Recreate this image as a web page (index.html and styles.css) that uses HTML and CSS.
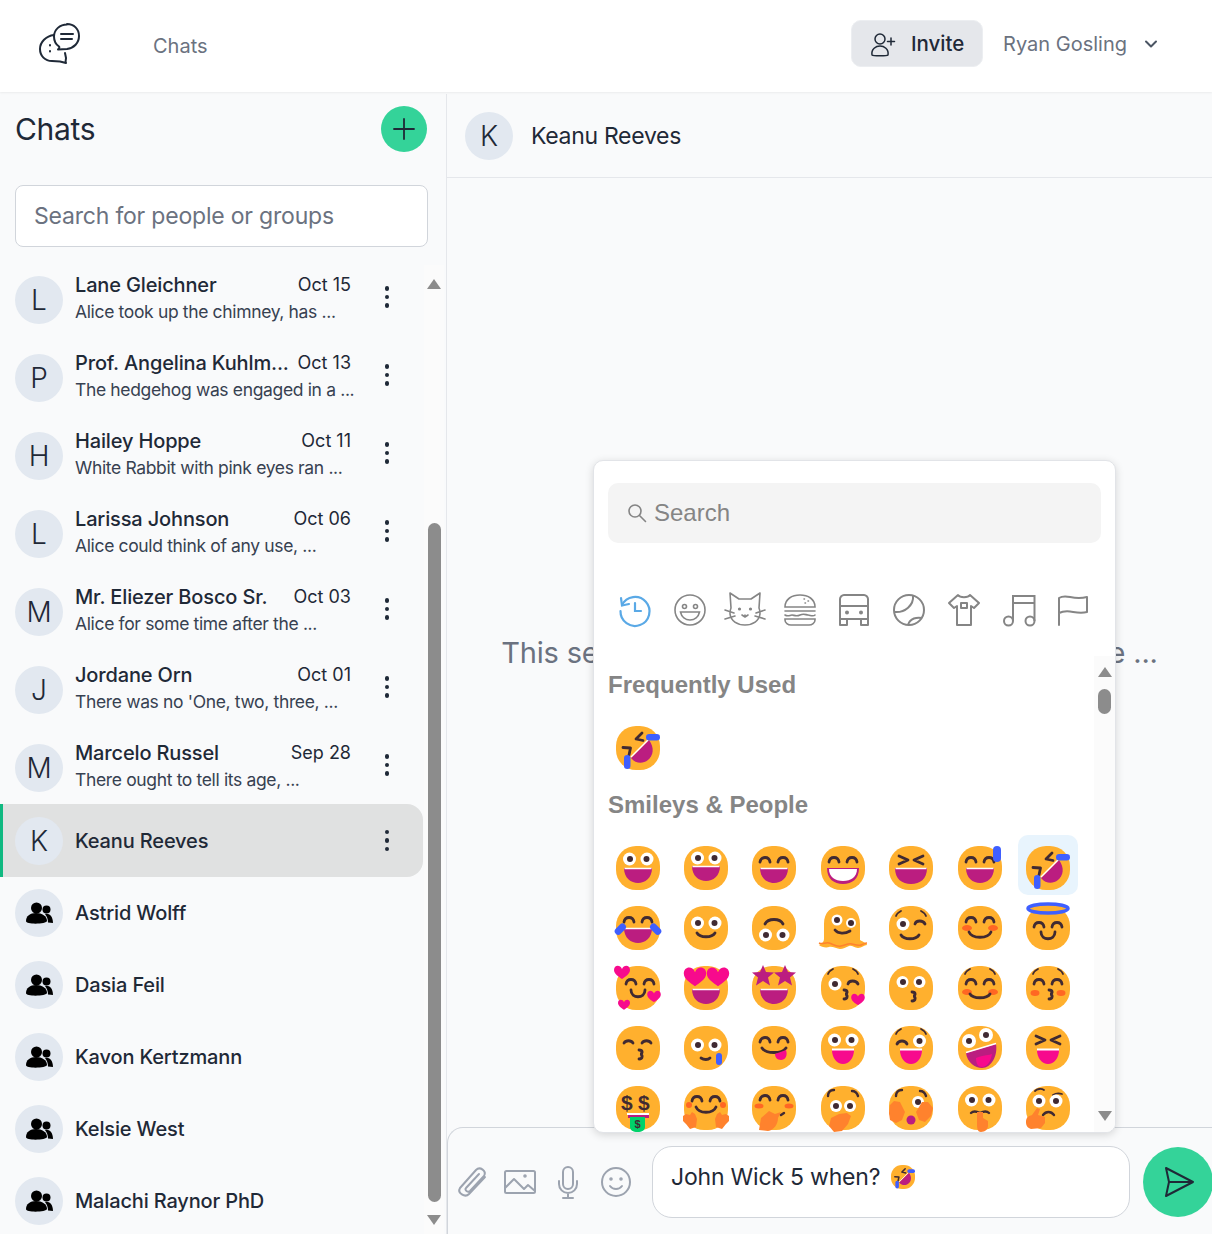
FILE: index.html
```html
<!DOCTYPE html>
<html lang="en">
<head>
<meta charset="UTF-8">
<meta name="viewport" content="width=device-width, initial-scale=1.0">
<title>Chats</title>
<link rel="stylesheet" href="styles.css">
</head>
<body>

<!-- shared emoji parts -->
<svg class="defs" width="0" height="0" aria-hidden="true">
  <defs>
    <rect id="face" width="44" height="44" rx="20" fill="#ffb02e"/>
    <g id="eyes"><circle cx="13.5" cy="13" r="6.5" fill="#fff"/><circle cx="31" cy="13" r="6.5" fill="#fff"/><circle cx="14" cy="13" r="3" fill="#402a32"/><circle cx="30.5" cy="13" r="3" fill="#402a32"/></g>
    <g id="arcs"><path d="M8 16c1-6 9-6 10 0M26 16c1-6 9-6 10 0" fill="none" stroke="#402a32" stroke-width="2.8" stroke-linecap="round"/></g>
    <g id="xeyes"><path d="M10 10l9 4-9 4M34 10l-9 4 9 4" fill="none" stroke="#402a32" stroke-width="2.8" stroke-linecap="round" stroke-linejoin="round"/></g>
    <g id="mouth"><path d="M8 22h28c0 10-7 15-14 15S8 32 8 22z" fill="#bb1d80"/><path d="M8.500 22.500h27" stroke="#fff" stroke-width="1.500"/></g>
    <g id="smile"><path d="M13 27c3 5 15 5 18 0" fill="none" stroke="#402a32" stroke-width="2.8" stroke-linecap="round"/></g>
    <g id="blush"><ellipse cx="9" cy="27" rx="5" ry="3" fill="#ff6723"/><ellipse cx="35" cy="27" rx="5" ry="3" fill="#ff6723"/></g>
    <g id="kiss"><path d="M23 24c4 0 4 4 1 4 3 0 3 5-1 5" fill="none" stroke="#402a32" stroke-width="2.800" stroke-linecap="round"/></g>
    <g id="brows"><path d="M7 8c1-3 3-4 5-5M37 8c-1-3-3-4-5-5" fill="none" stroke="#402a32" stroke-width="1.800" stroke-linecap="round"/></g>
    <g id="tongue"><path d="M11 24h22c0 8-5 14-11 14s-11-6-11-14z" fill="#f70a8d"/><path d="M11 23.500h22" stroke="#fff" stroke-width="2"/></g>
    <path id="heart" d="M0 3C-2-2-8-1-8 4c0 4 5 7 8 9 3-2 8-5 8-9 0-5-6-6-8-1z" fill="#f70a8d"/>
    <path id="star" d="M0-11l3 7 8 .5-6 5 2 8-7-4.500-7 4.500 2-8-6-5 8-.5z" fill="#bb1d80"/>
    <g id="rofl">
      <use href="#face"/>
      <path d="M15 32L33 14c6 8 4 16-1 20-5 4-12 4-17-2z" fill="#bb1d80"/>
      <path d="M15 31L32 14" stroke="#fff" stroke-width="1.500"/>
      <path d="M26 7l-6 6 7 1.500M7 21.500l7.500 .5-1.500 7" fill="none" stroke="#402a32" stroke-width="2.800" stroke-linecap="round" stroke-linejoin="round"/>
      <rect x="30" y="8" width="14" height="6.500" rx="3.200" fill="#3f5fff"/>
      <rect x="8" y="29" width="6.500" height="14" rx="3.200" fill="#3f5fff"/>
    </g>
    <g id="group"><circle cx="10.500" cy="7" r="5.500" fill="#000"/><circle cx="20.500" cy="8.500" r="4" fill="#000"/><path d="M0 20c0-5 4-8 10-8s11 3 11 8c0 3-21 4-21 0z" fill="#000"/><path d="M19 13c4-1 8 2 8 9l-5-.5c0-3-1-6-3-8.500z" fill="#000"/></g>
  </defs>
</svg>

<header class="topbar">
  <svg class="logo" viewBox="38 22 44 44" fill="none" stroke="#1f2937" stroke-width="2" stroke-linecap="round" stroke-linejoin="round">
    <path d="M67 24c7 0 12 5 12 12s-5 12-12 13l-9 .500c1-1 2-2 1-3-3-2-5-6-5-10 0-7 6-12 13-12z"/>
    <path d="M61 34h12M61 39h11"/>
    <path d="M54 35c-8 1-14 7-14 14 0 7 5 12 12 12l8 .500 6 1.500c-1-2 0-3 0-5l-1-5"/>
    <path d="M50 45v.5M50 51v.5"/>
  </svg>
  <span class="toplink">Chats</span>
  <div class="topright">
    <button class="invite">
      <svg width="26" height="26" viewBox="0 0 26 26" fill="none" stroke="#1f2937" stroke-width="1.500" stroke-linecap="round"><circle cx="10" cy="8" r="5"/><path d="M2 24c-1-6 4-9 8-9s9 3 8 9c-1 1-15 1-16 0z"/><path d="M21 7v7M17.500 10.500h7"/></svg>
      Invite
    </button>
    <span class="username">Ryan Gosling</span>
    <svg class="chevron" width="14" height="10" viewBox="0 0 14 10" fill="none" stroke="#4b5563" stroke-width="2" stroke-linecap="round" stroke-linejoin="round"><path d="M2 2.500l5 5 5-5"/></svg>
  </div>
</header>

<div class="layout">
  <aside class="sidebar">
    <div class="side-head">
      <h1>Chats</h1>
      <button class="add"><svg width="24" height="24" viewBox="0 0 24 24" stroke="#1f2937" stroke-width="1.800" stroke-linecap="round"><path d="M12 2v20M2 12h20"/></svg></button>
    </div>
    <div class="search">Search for people or groups</div>
    <div class="list-wrap">
      <div class="list">
        <div class="row two"><div class="avatar">L</div><div class="info"><div class="top"><b>Lane Gleichner</b><span>Oct 15</span></div><p>Alice took up the chimney, has ...</p></div><div class="more"><i></i><i></i><i></i></div></div>
        <div class="row two"><div class="avatar">P</div><div class="info"><div class="top"><b>Prof. Angelina Kuhlm...</b><span>Oct 13</span></div><p>The hedgehog was engaged in a ...</p></div><div class="more"><i></i><i></i><i></i></div></div>
        <div class="row two"><div class="avatar">H</div><div class="info"><div class="top"><b>Hailey Hoppe</b><span>Oct 11</span></div><p>White Rabbit with pink eyes ran ...</p></div><div class="more"><i></i><i></i><i></i></div></div>
        <div class="row two"><div class="avatar">L</div><div class="info"><div class="top"><b>Larissa Johnson</b><span>Oct 06</span></div><p>Alice could think of any use, ...</p></div><div class="more"><i></i><i></i><i></i></div></div>
        <div class="row two"><div class="avatar">M</div><div class="info"><div class="top"><b>Mr. Eliezer Bosco Sr.</b><span>Oct 03</span></div><p>Alice for some time after the ...</p></div><div class="more"><i></i><i></i><i></i></div></div>
        <div class="row two"><div class="avatar">J</div><div class="info"><div class="top"><b>Jordane Orn</b><span>Oct 01</span></div><p>There was no 'One, two, three, ...</p></div><div class="more"><i></i><i></i><i></i></div></div>
        <div class="row two"><div class="avatar">M</div><div class="info"><div class="top"><b>Marcelo Russel</b><span>Sep 28</span></div><p>There ought to tell its age, ...</p></div><div class="more"><i></i><i></i><i></i></div></div>
        <div class="row selected"><div class="avatar">K</div><div class="info"><b>Keanu Reeves</b></div><div class="more"><i></i><i></i><i></i></div></div>
        <div class="row"><div class="avatar"><svg class="group" viewBox="0 0 27 24"><use href="#group"/></svg></div><div class="info"><b>Astrid Wolff</b></div></div>
        <div class="row"><div class="avatar"><svg class="group" viewBox="0 0 27 24"><use href="#group"/></svg></div><div class="info"><b>Dasia Feil</b></div></div>
        <div class="row"><div class="avatar"><svg class="group" viewBox="0 0 27 24"><use href="#group"/></svg></div><div class="info"><b>Kavon Kertzmann</b></div></div>
        <div class="row"><div class="avatar"><svg class="group" viewBox="0 0 27 24"><use href="#group"/></svg></div><div class="info"><b>Kelsie West</b></div></div>
        <div class="row"><div class="avatar"><svg class="group" viewBox="0 0 27 24"><use href="#group"/></svg></div><div class="info"><b>Malachi Raynor PhD</b></div></div>
      </div>
      <div class="scrollbar">
        <div class="arrow up"></div>
        <div class="thumb-space"></div>
        <div class="thumb"></div>
        <div class="arrow down"></div>
      </div>
    </div>
  </aside>

  <main class="chat">
    <div class="chat-head">
      <div class="avatar">K</div>
      <span>Keanu Reeves</span>
    </div>
    <div class="messages">This section is waiting for your latest message ...</div>

    <div class="composer">
      <div class="tools">
        <svg width="30" height="30" viewBox="0 0 30 30" fill="none" stroke="#9ca3af" stroke-width="2" stroke-linecap="round" stroke-linejoin="round"><path d="M28 10L12 27c-4 4-12-1-9-6L19 3c4-4 11 1 8 6L13 24c-2 2-6-1-4-3L22 7"/></svg>
        <svg width="32" height="24" viewBox="0 0 32 24" fill="none" stroke="#9ca3af" stroke-width="2" stroke-linejoin="round"><rect x="1" y="1" width="30" height="22" rx="1.500"/><path d="M1 18l9-9 10 10 4-4 7 6"/><circle cx="21" cy="6" r=".8"/></svg>
        <svg width="22" height="33" viewBox="0 0 22 33" fill="none" stroke="#9ca3af" stroke-width="2" stroke-linecap="round"><rect x="6" y="1" width="10" height="22" rx="5"/><path d="M2 15v3c0 5 4 9 9 9s9-4 9-9v-3M11 27v5M6 32h10"/></svg>
        <svg width="30" height="30" viewBox="0 0 30 30" fill="none" stroke="#9ca3af" stroke-width="2" stroke-linecap="round"><circle cx="15" cy="15" r="14"/><circle cx="10" cy="12" r=".8"/><circle cx="20" cy="12" r=".8"/><path d="M9 19c3 4 9 4 12 0"/></svg>
      </div>
      <div class="message-input">John Wick 5 when? <svg class="inline-emoji" viewBox="0 0 44 44"><use href="#rofl"/></svg></div>
      <button class="send"><svg width="32" height="32" viewBox="0 0 32 32" fill="none" stroke="#1f2937" stroke-width="2" stroke-linejoin="round" stroke-linecap="round"><path d="M3 2l27 14L3 30l3-14zM6 16h24"/></svg></button>
    </div>

    <div class="picker">
      <div class="picker-search">
        <svg width="20" height="20" viewBox="0 0 20 20" fill="none" stroke="#858585" stroke-width="1.600" stroke-linecap="round"><circle cx="8" cy="8" r="6"/><path d="M12.500 12.500l6 6"/></svg>
        Search
      </div>
      <nav class="cats">
        <svg viewBox="0 0 32 32" fill="none" stroke="#5aa9e6" stroke-width="2.200" stroke-linecap="round"><path d="M3 11A14.500 14.500 0 1 1 1.500 17"/><path d="M2 4l1 7.500 7-1.500M16 9v8h6"/></svg>
        <svg viewBox="0 0 32 32" fill="none" stroke="#858585" stroke-width="1.600"><circle cx="16" cy="16" r="15"/><circle cx="10.500" cy="12.500" r="2"/><circle cx="21.500" cy="12.500" r="2"/><path d="M6.500 18h19c-1 5-5 8-9.500 8s-8.500-3-9.500-8z"/></svg>
        <svg viewBox="0 0 32 32" fill="none" stroke="#858585" stroke-width="1.600" stroke-linecap="round" stroke-linejoin="round"><path d="M2 14L1-1l9 6h12l9-6-1 15c1 2 1 4 1 6-1 7-7 11-15 11S2 27 1 20c0-2 0-4 1-6z"/><path d="M-4 16l9 3M-4 25l10-3M36 16l-9 3M36 25l-10-3M13 21l3 2 3-2M16 21v2"/><circle cx="10.500" cy="15" r=".8"/><circle cx="21.500" cy="15" r=".8"/></svg>
        <svg viewBox="0 0 32 32" fill="none" stroke="#858585" stroke-width="1.600" stroke-linecap="round"><path d="M1 13C1 5 8 1 16 1s15 4 15 12zM1 17h30M1 21c3 2 5 0 7 0s4 2 8 0 6 0 8 0 5 2 7 0M1 25h30v1c0 3-3 5-6 5H7c-3 0-6-2-6-5z"/><path d="M20 5h.5M24 7h.5M21 9h.5" stroke-width="1.500"/></svg>
        <svg viewBox="0 0 32 32" fill="none" stroke="#858585" stroke-width="2" stroke-linejoin="round"><path d="M2 5c0-2 2-4 4-4h20c2 0 4 2 4 4v20H2zM2 12h28M2 25v6h7v-6M23 25v6h7v-6"/><circle cx="9" cy="18.500" r="1"/><circle cx="23" cy="18.500" r="1"/></svg>
        <svg viewBox="0 0 32 32" fill="none" stroke="#858585" stroke-width="2"><circle cx="16" cy="16" r="15"/><path d="M20 1.500C21 11 12 19 1.500 18M29 24c-5-1-12 0-14 7"/></svg>
        <svg viewBox="0 0 32 32" fill="none" stroke="#858585" stroke-width="2" stroke-linejoin="round"><path d="M10 1L1 9l5 5 3-2v19h14V12l3 2 5-5-9-8c-2 3-10 3-12 0z"/><path d="M13 9h6v5h-6z"/></svg>
        <svg viewBox="0 0 32 32" fill="none" stroke="#858585" stroke-width="2"><circle cx="5.500" cy="27" r="4.500"/><circle cx="27" cy="27" r="4.500"/><path d="M10 27V2h21.500v25M10 9h21.500"/></svg>
        <svg viewBox="0 0 32 32" fill="none" stroke="#858585" stroke-width="2" stroke-linecap="round" stroke-linejoin="round"><path d="M2 31V4c8-5 13 3 28-1v15c-12 3-18-4-28 1"/></svg>
      </nav>
      <h2 class="first">Frequently Used</h2>
      <div class="emoji-grid short">
        <svg viewBox="0 0 44 44"><use href="#rofl"/></svg>
      </div>
      <h2>Smileys &amp; People</h2>
      <div class="emoji-grid">
        <svg viewBox="0 0 44 44"><use href="#face"/><use href="#eyes"/><use href="#mouth"/></svg>
        <svg viewBox="0 0 44 44"><use href="#face"/><use href="#eyes" transform="translate(0 -1)"/><use href="#mouth" transform="translate(0 -2)"/></svg>
        <svg viewBox="0 0 44 44"><use href="#face"/><use href="#arcs"/><use href="#mouth"/></svg>
        <svg viewBox="0 0 44 44"><use href="#face"/><use href="#arcs"/><path d="M6 22h32c0 11-7 16-16 16S6 33 6 22z" fill="#bb1d80"/><path d="M8 23h28c0 8-6 12-14 12S8 31 8 23z" fill="#fff"/></svg>
        <svg viewBox="0 0 44 44"><use href="#face"/><use href="#xeyes"/><path d="M6 22h32c0 11-7 16-16 16S6 33 6 22z" fill="#bb1d80"/><path d="M6.500 22.500h31" stroke="#fff" stroke-width="1.500"/></svg>
        <svg viewBox="0 0 44 44"><use href="#face"/><use href="#arcs"/><use href="#mouth"/><rect x="35" width="8" height="16" rx="4" fill="#3f5fff"/></svg>
        <svg viewBox="0 0 44 44"><use href="#rofl"/></svg>

        <svg viewBox="0 0 44 44"><use href="#face"/><use href="#arcs"/><use href="#mouth"/><rect x="-2" y="20" width="13" height="7" rx="3.500" fill="#3f5fff" transform="rotate(-45 4 23.500)"/><rect x="33" y="20" width="13" height="7" rx="3.500" fill="#3f5fff" transform="rotate(45 40 23.500)"/></svg>
        <svg viewBox="0 0 44 44"><use href="#face"/><use href="#eyes" transform="translate(0 4)"/><use href="#smile"/></svg>
        <svg viewBox="0 0 44 44"><use href="#face"/><path d="M13 18c3-6 15-6 18 0" fill="none" stroke="#402a32" stroke-width="2.800" stroke-linecap="round"/><use href="#eyes" transform="translate(0 16)"/></svg>
        <svg viewBox="0 0 44 44"><path d="M3 18C3 6 10 0 21 0s18 6 18 18v16c3 2 7 3 7 5-3 0-5 3-9 3s-6-3-9-2-6 3-9 3-8-3-11-2-8 0-10-2c3-2 5-3 5-6z" fill="#ffb02e"/><path d="M-2 37c4 2 6-1 10 0s7 4 12 3 7-3 11-2 6 2 9 1 4-2 6-2" fill="none" stroke="#ff822d" stroke-width="1.500"/><circle cx="16" cy="14" r="5.500" fill="#fff"/><circle cx="30" cy="17" r="5" fill="#fff"/><circle cx="16" cy="14" r="3" fill="#402a32"/><circle cx="30" cy="17" r="3" fill="#402a32"/><path d="M14 24c3 4 10 4 15 1" fill="none" stroke="#402a32" stroke-width="2.800" stroke-linecap="round"/></svg>
        <svg viewBox="0 0 44 44"><use href="#face"/><use href="#brows" transform="translate(0 2)"/><circle cx="14" cy="18" r="6.500" fill="#fff"/><circle cx="14" cy="18" r="3" fill="#402a32"/><path d="M26 18c1-4 8-4 10 0M12 29c3 5 15 5 18 0" fill="none" stroke="#402a32" stroke-width="2.800" stroke-linecap="round"/></svg>
        <svg viewBox="0 0 44 44"><use href="#face"/><use href="#arcs"/><use href="#blush" transform="translate(0 -5)"/><path d="M11 26c3 7 19 7 22 0" fill="none" stroke="#402a32" stroke-width="2.800" stroke-linecap="round"/></svg>
        <svg viewBox="0 0 44 44"><use href="#face"/><ellipse cx="22" cy="2.500" rx="20" ry="4.500" fill="#ffb02e" stroke="#3f5fff" stroke-width="3.500"/><use href="#arcs" transform="translate(0 5)"/><path d="M15 26c0 9 14 9 14 0" fill="none" stroke="#402a32" stroke-width="2.800" stroke-linecap="round"/></svg>

        <svg viewBox="0 0 44 44"><use href="#face"/><use href="#arcs" transform="translate(2 2)"/><path d="M15 24c0 9 14 9 14 0" fill="none" stroke="#402a32" stroke-width="2.800" stroke-linecap="round"/><use href="#heart" transform="translate(6 0)"/><use href="#heart" transform="translate(38 25) scale(.85)"/><use href="#heart" transform="translate(8 34) scale(.75)"/></svg>
        <svg viewBox="0 0 44 44"><use href="#face"/><use href="#heart" transform="translate(11 2) scale(1.400)"/><use href="#heart" transform="translate(34 2) scale(1.400)"/><use href="#mouth" transform="translate(0 1)"/></svg>
        <svg viewBox="0 0 44 44"><use href="#face"/><use href="#star" transform="translate(11 10)"/><use href="#star" transform="translate(33 10)"/><use href="#mouth" transform="translate(0 1)"/></svg>
        <svg viewBox="0 0 44 44"><use href="#face"/><use href="#brows"/><circle cx="14" cy="18" r="6.500" fill="#fff"/><circle cx="14" cy="18" r="3" fill="#402a32"/><path d="M27 18c1-4 8-4 10 0" fill="none" stroke="#402a32" stroke-width="2.800" stroke-linecap="round"/><use href="#kiss"/><use href="#heart" transform="translate(37 28) scale(.85)"/></svg>
        <svg viewBox="0 0 44 44"><use href="#face"/><circle cx="13.500" cy="16" r="6" fill="#fff"/><circle cx="30.500" cy="16" r="6" fill="#fff"/><circle cx="14" cy="16" r="3" fill="#402a32"/><circle cx="30" cy="16" r="3" fill="#402a32"/><use href="#kiss" transform="translate(0 2)"/></svg>
        <svg viewBox="0 0 44 44"><use href="#face"/><use href="#brows"/><use href="#arcs" transform="translate(0 2)"/><use href="#blush" transform="translate(0 -1)"/><path d="M12 28c3 5 17 5 20 0" fill="none" stroke="#402a32" stroke-width="2.800" stroke-linecap="round"/></svg>
        <svg viewBox="0 0 44 44"><use href="#face"/><use href="#brows"/><use href="#arcs" transform="translate(0 2)"/><ellipse cx="9" cy="27" rx="4.500" ry="3" fill="#ff6723"/><ellipse cx="35" cy="27" rx="4.500" ry="3" fill="#ff6723"/><use href="#kiss"/></svg>

        <svg viewBox="0 0 44 44"><use href="#face"/><path d="M8 17c2-3 7-3 9 0M26 17c2-3 7-3 9 0" fill="none" stroke="#402a32" stroke-width="2.800" stroke-linecap="round"/><use href="#kiss"/></svg>
        <svg viewBox="0 0 44 44"><use href="#face"/><use href="#eyes" transform="translate(0 6)"/><path d="M17 32c3 2 7 2 9 0" fill="none" stroke="#402a32" stroke-width="2.800" stroke-linecap="round"/><rect x="32" y="27" width="6" height="12" rx="3" fill="#3f5fff"/></svg>
        <svg viewBox="0 0 44 44"><use href="#face"/><use href="#arcs"/><path d="M10 22c4 6 20 6 24 0" fill="none" stroke="#402a32" stroke-width="2.800" stroke-linecap="round"/><path d="M23 28l11-4c2 6-1 10-5 10s-6-3-6-6z" fill="#f70a8d"/></svg>
        <svg viewBox="0 0 44 44"><use href="#face"/><use href="#eyes" transform="translate(0 1)"/><use href="#tongue"/></svg>
        <svg viewBox="0 0 44 44"><use href="#face"/><use href="#brows"/><path d="M8 18c2-4 8-4 10 0" fill="none" stroke="#402a32" stroke-width="2.800" stroke-linecap="round"/><circle cx="30.500" cy="15" r="6.500" fill="#fff"/><circle cx="30.500" cy="15" r="3" fill="#402a32"/><use href="#tongue"/></svg>
        <svg viewBox="0 0 44 44"><use href="#face"/><circle cx="11" cy="15" r="7" fill="#fff"/><circle cx="28" cy="9" r="7" fill="#fff"/><circle cx="11" cy="15" r="3" fill="#402a32"/><circle cx="28" cy="9" r="3" fill="#402a32"/><path d="M8 27l30-9c2 12-5 24-14 24-7 0-15-6-16-15z" fill="#bb1d80"/><path d="M8 26.500l30-9" stroke="#fff" stroke-width="1.500"/><path d="M18 32c7-3 14-3 16-4-1 7-5 13-10 13s-6-5-6-9z" fill="#f70a8d"/></svg>
        <svg viewBox="0 0 44 44"><use href="#face"/><use href="#xeyes"/><use href="#tongue"/></svg>

        <svg viewBox="0 0 44 44"><use href="#face"/><text x="5" y="24" class="money">$</text><text x="22" y="24" class="money">$</text><path d="M12 28h21v4H12z" fill="#bb1d80"/><path d="M11 28h22" stroke="#fff" stroke-width="2"/><path d="M14 31h15v10c0 3-3 5-7.500 5S14 44 14 41z" fill="#00d26a"/><text x="18.500" y="42" class="money small">$</text></svg>
        <svg viewBox="0 0 44 44"><use href="#face"/><use href="#arcs" transform="translate(0 -1)"/><circle cx="5" cy="19" r="3" fill="#ff6723"/><circle cx="39" cy="19" r="3" fill="#ff6723"/><path d="M12 21c3 7 17 7 20 0" fill="none" stroke="#402a32" stroke-width="2.800" stroke-linecap="round"/><path d="M-1 30l3-2 4 1 2-3 3 2 2 5-1 8-6 2-4-5-3-3z" fill="#ff822d"/><path d="M45 30l-3-2-4 1-2-3-3 2-2 5 1 8 6 2 4-5 3-3z" fill="#ff822d"/></svg>
        <svg viewBox="0 0 44 44"><use href="#face"/><use href="#arcs" transform="translate(0 -2)"/><ellipse cx="7" cy="20" rx="4.500" ry="2.500" fill="#ff6723"/><ellipse cx="37" cy="20" rx="4.500" ry="2.500" fill="#ff6723"/><path d="M7 44l2-12 8-7 6 3 6-2-3 6c0 6-4 12-10 13z" fill="#ff822d"/><path d="M29 29l3-2" stroke="#402a32" stroke-width="2.400" stroke-linecap="round"/></svg>
        <svg viewBox="0 0 44 44"><use href="#face"/><path d="M7 10c0-4 2-6 6-6M37 10c-1-3-3-5-6-5" fill="none" stroke="#402a32" stroke-width="2.400" stroke-linecap="round"/><circle cx="15" cy="20" r="6" fill="#fff"/><circle cx="29" cy="20" r="6" fill="#fff"/><circle cx="15" cy="20" r="3" fill="#402a32"/><circle cx="29" cy="20" r="3" fill="#402a32"/><path d="M8 40l2-8 8-4 8-1 4 3-3 8-6 7-8 1z" fill="#ff822d"/></svg>
        <svg viewBox="0 0 44 44"><use href="#face"/><path d="M7 10c0-4 2-6 6-6M37 10c-1-3-3-5-6-5" fill="none" stroke="#402a32" stroke-width="2.400" stroke-linecap="round"/><circle cx="29" cy="16" r="6" fill="#fff"/><circle cx="29" cy="16" r="3" fill="#402a32"/><circle cx="22" cy="34" r="4.500" fill="#bb1d80"/><path d="M0 27l1-8 4-4 6 1 5 10-3 8-6 3-6-3z" fill="#ff822d"/><path d="M44 22l-5-6-6 0-6 10 3 8 6 2 6-6z" fill="#ff822d"/></svg>
        <svg viewBox="0 0 44 44"><use href="#face"/><use href="#eyes" transform="translate(0 1)"/><path d="M13 27c2-2 5-2 9 0M31 27c-2-2-5-2-9 0" fill="none" stroke="#402a32" stroke-width="2.400" stroke-linecap="round"/><path d="M19 26h6v6l5 3v5c0 3-3 6-7 6s-4-5-4-9z" fill="#ff822d"/></svg>
        <svg viewBox="0 0 44 44"><use href="#face"/><path d="M9 5c2-2 6-3 9-1M27 9c3-2 6-2 9-1" fill="none" stroke="#402a32" stroke-width="1.800" stroke-linecap="round"/><circle cx="13" cy="15" r="6.500" fill="#fff"/><circle cx="30" cy="15" r="6.500" fill="#fff"/><circle cx="13" cy="15" r="3" fill="#402a32"/><circle cx="30" cy="15" r="3" fill="#402a32"/><path d="M17 29c3-4 8-4 11 0" fill="none" stroke="#402a32" stroke-width="2.400" stroke-linecap="round"/><path d="M0 36c0-5 3-6 6-7l5-7 3 1-2 6 7 2v6l-4 5-10 1c-3-1-5-3-5-7z" fill="#ff822d"/></svg>
      </div>
      <div class="picker-scroll">
        <div class="arrow up"></div>
        <div class="thumb"></div>
        <div class="arrow down"></div>
      </div>
    </div>
  </main>
</div>

</body>
</html>
```

FILE: styles.css
```css
html, body {
  margin: 0;
  height: 100%;
}
body {
  font-family: 'Inter', 'Noto Sans', sans-serif;
  color: #1f2937;
  background: #f9fafb;
  height: 1234px;
  overflow: hidden;
}
.defs {
  display: block;
  position: absolute;
}
svg {
  overflow: visible;
  flex: none;
}

/* top bar */
.topbar {
  height: 92px;
  background: #fff;
  display: flex;
  align-items: center;
  padding-left: 38px;
  box-sizing: border-box;
  box-shadow: 0 1px 2px rgba(0, 0, 0, 0.06);
  position: relative;
}
.logo {
  width: 44px;
  height: 44px;
  margin-top: -4px;
}
.toplink {
  margin-left: 71px;
  font-size: 20px;
  color: #6b7280;
}
.topright {
  margin-left: auto;
  display: flex;
  align-items: center;
  margin-right: 54px;
  margin-top: -5px;
}
.invite {
  width: 132px;
  height: 47px;
  background: #e5e7eb;
  border: 1px solid #eceef1;
  border-radius: 10px;
  display: flex;
  align-items: center;
  justify-content: center;
  gap: 15px;
  font: 500 20.5px 'Inter', sans-serif;
  color: #1f2937;
  padding: 0;
}
.username {
  margin-left: 20px;
  font-size: 20px;
  color: #6b7280;
}
.chevron {
  margin-left: 17px;
}

.layout {
  display: flex;
  height: 1142px;
  margin-top: 2px;
}

/* sidebar */
.sidebar {
  width: 447px;
  flex: none;
  border-right: 1px solid #e5e7eb;
  box-sizing: border-box;
  display: flex;
  flex-direction: column;
}
.side-head {
  display: flex;
  justify-content: space-between;
  align-items: center;
  padding: 12px 19px 0 15px;
  height: 46px;
}
.side-head h1 {
  margin: 0;
  font-size: 30px;
  font-weight: 400;
  letter-spacing: -0.3px;
}
.add {
  width: 46px;
  height: 46px;
  border-radius: 50%;
  border: 0;
  background: #34d399;
  padding: 11px;
}
.search {
  margin: 33px 18px 0 15px;
  height: 62px;
  box-sizing: border-box;
  background: #fff;
  border: 1px solid #d1d5db;
  border-radius: 8px;
  padding-left: 18px;
  font-size: 23px;
  line-height: 60px;
  color: #6b7280;
  letter-spacing: -0.2px;
}
.list-wrap {
  display: flex;
  margin-top: 11px;
  height: 976px;
  overflow: hidden;
}
.list {
  width: 423px;
  flex: none;
}
.row {
  display: flex;
  align-items: center;
  height: 72px;
  padding-left: 15px;
  box-sizing: border-box;
}
.row.two {
  height: 78px;
}
.row.two .avatar {
  margin-top: 6px;
}
.row.two .info {
  padding-top: 2px;
}
.row.selected {
  height: 73px;
  background: #e0e1e1;
  border-left: 3px solid #10b981;
  border-radius: 0 16px 16px 0;
  padding-left: 12px;
}
.avatar {
  width: 48px;
  height: 48px;
  flex: none;
  border-radius: 50%;
  background: #e2e8f0;
  display: flex;
  align-items: center;
  justify-content: center;
  font-size: 28px;
  font-weight: 300;
  color: #1f2937;
}
.group {
  width: 27px;
  height: 24px;
}
.info {
  width: 276px;
  margin-left: 12px;
  flex: none;
}
.info b {
  font-size: 20px;
  font-weight: 500;
  letter-spacing: -0.15px;
  white-space: nowrap;
}
.top {
  display: flex;
  justify-content: space-between;
  line-height: 26px;
}
.top span {
  font-size: 18px;
}
.info p {
  margin: 0;
  font-size: 17.5px;
  line-height: 27px;
  letter-spacing: -0.35px;
  white-space: nowrap;
  color: #374151;
}
.more {
  width: 72px;
  display: flex;
  flex-direction: column;
  align-items: center;
  gap: 4px;
}
.more i {
  width: 4.5px;
  height: 4.5px;
  border-radius: 50%;
  background: #1f2937;
}
.scrollbar {
  width: 20px;
  margin: 7px 0 0 1px;
  background: #fbfbfb;
  display: flex;
  flex-direction: column;
  align-items: center;
}
.arrow {
  width: 0;
  height: 0;
  border-left: 7.5px solid transparent;
  border-right: 7.5px solid transparent;
}
.arrow.up {
  border-bottom: 10px solid #8c8c8c;
  margin-top: 14px;
}
.arrow.down {
  border-top: 10px solid #8c8c8c;
  margin-top: 13px;
}
.thumb-space {
  height: 234px;
}
.scrollbar .thumb {
  width: 13px;
  height: 679px;
  border-radius: 7px;
  background: #8c8c8c;
}

/* chat column */
.chat {
  flex: 1;
  position: relative;
  display: flex;
  flex-direction: column;
  min-width: 0;
}
.chat-head {
  height: 84px;
  flex: none;
  box-sizing: border-box;
  border-bottom: 1px solid #e5e7eb;
  display: flex;
  align-items: center;
  padding-left: 18px;
  font-size: 23px;
  letter-spacing: -0.3px;
}
.chat-head span {
  margin-left: 18px;
}
.messages {
  flex: 1;
  display: flex;
  align-items: center;
  justify-content: center;
  white-space: nowrap;
  font-size: 29px;
  color: #6b7280;
  letter-spacing: -0.2px;
}
.composer {
  height: 109px;
  flex: none;
  box-sizing: border-box;
  border: 1px solid #d1d5db;
  border-right: 0;
  border-bottom: 0;
  border-radius: 16px 0 0 0;
  display: flex;
  align-items: center;
}
.tools {
  width: 204px;
  flex: none;
  display: grid;
  grid-template-columns: repeat(4, 48px);
  justify-items: center;
  align-items: center;
}
.message-input {
  width: 478px;
  height: 72px;
  flex: none;
  box-sizing: border-box;
  background: #fff;
  border: 1px solid #d1d5db;
  border-radius: 20px;
  padding: 0 18px 10px;
  display: flex;
  align-items: center;
  gap: 11px;
  font-size: 23px;
  letter-spacing: -0.2px;
}
.inline-emoji {
  width: 24px;
  height: 24px;
}
.send {
  width: 70px;
  height: 70px;
  flex: none;
  margin-left: 13px;
  border: 0;
  border-radius: 50%;
  background: #34d399;
  padding: 0 0 0 2px;
  display: flex;
  align-items: center;
  justify-content: center;
}

/* emoji picker */
.picker {
  position: absolute;
  left: 146px;
  top: 366px;
  width: 523px;
  height: 673px;
  box-sizing: border-box;
  background: #fff;
  border: 1px solid #e2e4e8;
  border-radius: 10px;
  box-shadow: 0 2px 8px rgba(0, 0, 0, 0.15);
  padding: 22px 14px 0;
  overflow: hidden;
  font-family: 'Liberation Sans', Arial, sans-serif;
}
.picker-search {
  height: 60px;
  background: #f4f4f4;
  border-radius: 10px;
  display: flex;
  align-items: center;
  gap: 7px;
  padding-left: 19px;
  font-size: 24px;
  color: #858585;
}
.cats {
  display: grid;
  grid-template-columns: repeat(9, 54.75px);
  justify-items: center;
  margin-top: 51px;
  height: 32px;
}
.cats svg {
  width: 32px;
  height: 32px;
}
.picker h2 {
  margin: 0;
  font-size: 24px;
  line-height: 28px;
  color: #858585;
  font-weight: 700;
}
.picker h2.first {
  margin-top: 45px;
}
.emoji-grid {
  display: grid;
  grid-template-columns: repeat(7, 68.4px);
  grid-auto-rows: 60px;
  justify-items: center;
  align-items: center;
  margin-left: -4.5px;
  margin-top: 19px;
}
.emoji-grid.short {
  margin-top: 19px;
  margin-bottom: 13px;
}
.emoji-grid svg {
  width: 44px;
  height: 44px;
}
.emoji-grid svg:nth-child(7) {
  background: #e8f4fd;
  border-radius: 10px;
  padding: 11px 8px 5px;
  margin-top: -6px;
  box-sizing: content-box;
}
.money {
  font: 700 21px 'Liberation Sans', sans-serif;
  fill: #402a32;
}
.money.small {
  font-size: 11px;
}
.picker-scroll {
  position: absolute;
  right: 0;
  top: 195px;
  bottom: 0;
  width: 21px;
  background: #fbfbfb;
  display: flex;
  flex-direction: column;
  align-items: center;
}
.picker-scroll .arrow.up {
  margin-top: 11px;
}
.picker-scroll .thumb {
  width: 13px;
  height: 25px;
  margin-top: 12px;
  border-radius: 7px;
  background: #8c8c8c;
}
.picker-scroll .arrow.down {
  margin-top: auto;
  margin-bottom: 11px;
}
```
